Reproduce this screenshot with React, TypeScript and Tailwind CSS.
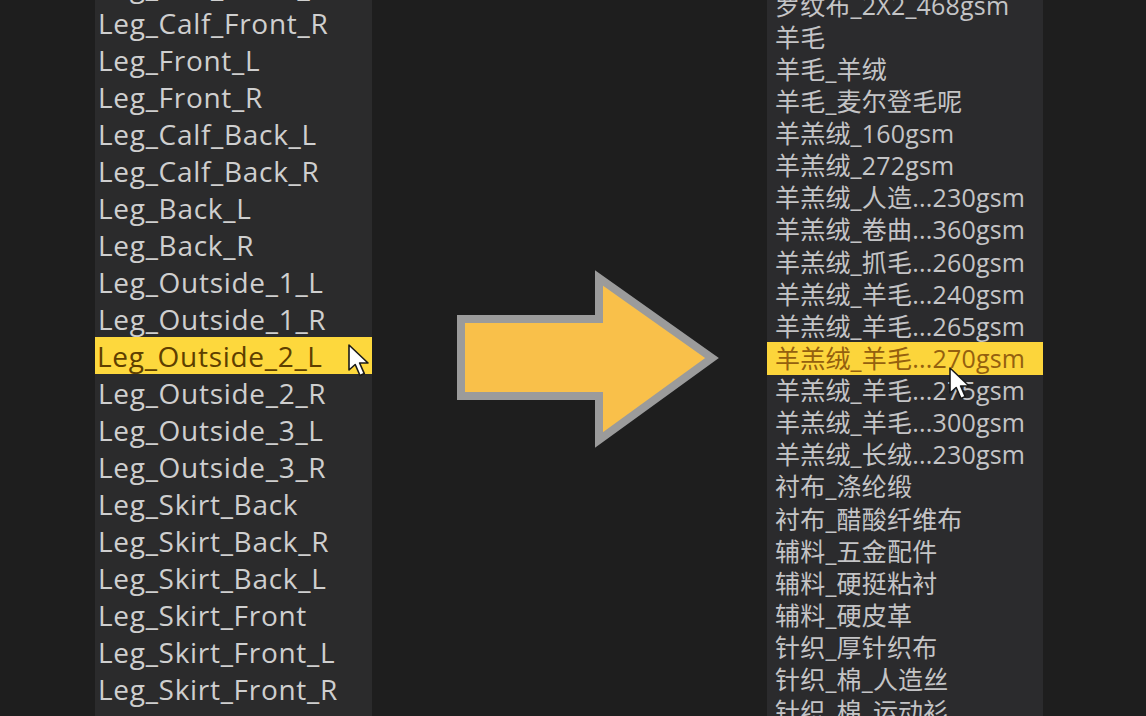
import React from "react";

const leftItems = [
  "Leg_Calf_Front_L",
  "Leg_Calf_Front_R",
  "Leg_Front_L",
  "Leg_Front_R",
  "Leg_Calf_Back_L",
  "Leg_Calf_Back_R",
  "Leg_Back_L",
  "Leg_Back_R",
  "Leg_Outside_1_L",
  "Leg_Outside_1_R",
  "Leg_Outside_2_L",
  "Leg_Outside_2_R",
  "Leg_Outside_3_L",
  "Leg_Outside_3_R",
  "Leg_Skirt_Back",
  "Leg_Skirt_Back_R",
  "Leg_Skirt_Back_L",
  "Leg_Skirt_Front",
  "Leg_Skirt_Front_L",
  "Leg_Skirt_Front_R",
  "Ankle_Back_L",
];

const rightItems = [
  "罗纹布_2X2_468gsm",
  "羊毛",
  "羊毛_羊绒",
  "羊毛_麦尔登毛呢",
  "羊羔绒_160gsm",
  "羊羔绒_272gsm",
  "羊羔绒_人造...230gsm",
  "羊羔绒_卷曲...360gsm",
  "羊羔绒_抓毛...260gsm",
  "羊羔绒_羊毛...240gsm",
  "羊羔绒_羊毛...265gsm",
  "羊羔绒_羊毛...270gsm",
  "羊羔绒_羊毛...275gsm",
  "羊羔绒_羊毛...300gsm",
  "羊羔绒_长绒...230gsm",
  "衬布_涤纶缎",
  "衬布_醋酸纤维布",
  "辅料_五金配件",
  "辅料_硬挺粘衬",
  "辅料_硬皮革",
  "针织_厚针织布",
  "针织_棉_人造丝",
  "针织_棉_运动衫",
];

function Cursor({ className }: { className: string }) {
  return (
    <svg className={className} width="26" height="36" viewBox="0 0 26 36">
      <path
        d="M2 2 L2 27 L8.2 21.5 L13 32.5 L17.3 30.6 L12.6 20 L21 20 Z"
        fill="#ffffff"
        stroke="#1a1a1a"
        strokeWidth="1.6"
        strokeLinejoin="round"
      />
    </svg>
  );
}

export default function App() {
  return (
    <div className="flex h-[716px] w-[1146px] overflow-hidden bg-[#1e1e1e]">
      <div className="w-[95px] shrink-0" />
      <div
        className="w-[277px] shrink-0 overflow-hidden bg-[#2b2b2c]"
        style={{ fontFamily: '"Open Sans", "Noto Sans", sans-serif' }}
      >
        <div className="-mt-[33px] flex flex-col">
          {leftItems.map((t) => {
            const hi = t === "Leg_Outside_2_L";
            return (
              <div
                key={t}
                className={
                  hi
                    ? "relative flex h-[37px] items-center bg-[#fdd83d] pl-[2px] text-[28px] leading-none tracking-[0.7px] text-[#5e3f00]"
                    : "relative flex h-[37px] items-center pl-[3px] text-[28px] leading-none tracking-[0.7px] text-[#cfcfcf]"
                }
              >
                <span className="whitespace-nowrap">{t}</span>
                {hi && <Cursor className="absolute left-[252px] top-[6px] z-10" />}
              </div>
            );
          })}
        </div>
      </div>
      <div className="w-[395px] shrink-0 pl-[80px] pt-[264px]">
        <svg width="272" height="190" viewBox="0 0 272 190">
          <polygon
            points="9,55 147,55 147,14 260,94 147,176 147,132 9,132"
            fill="#f9c04a"
            stroke="#9b9b9b"
            strokeWidth="8"
            strokeLinejoin="miter"
          />
        </svg>
      </div>
      <div
        className="w-[276px] shrink-0 overflow-hidden bg-[#2b2b2d]"
        style={{ fontFamily: '"Open Sans", "Noto Sans CJK SC", sans-serif' }}
      >
        <div className="-mt-[11px] flex flex-col">
          {rightItems.map((t) => {
            const hi = t === "羊羔绒_羊毛...270gsm";
            return (
              <div
                key={t}
                className={
                  hi
                    ? "relative flex h-[32.14px] items-center bg-[#fcd53b] pl-[8px] text-[25px] leading-none tracking-[0.2px] text-[#94600f]"
                    : "relative flex h-[32.14px] items-center pl-[8px] text-[25px] leading-none tracking-[0.2px] text-[#c4c4c6]"
                }
              >
                <span className="whitespace-nowrap">{t}</span>
                {hi && <Cursor className="absolute left-[181px] top-[24px] z-10" />}
              </div>
            );
          })}
        </div>
      </div>
      <div className="flex-1" />
    </div>
  );
}
